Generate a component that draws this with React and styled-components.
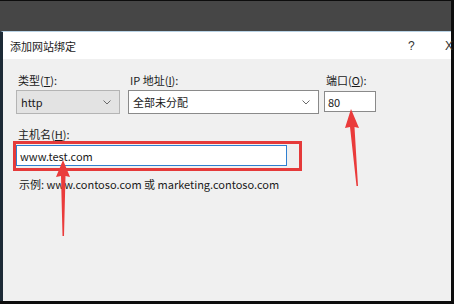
import styled, { createGlobalStyle } from 'styled-components'

const Global = createGlobalStyle`
  html, body { margin: 0; padding: 0; background: #0d0d0d; }
  body { font-family: "Noto Sans CJK SC", "Noto Sans", sans-serif; }
`

const Screen = styled.div`
  width: 454px;
  height: 304px;
  box-sizing: border-box;
  padding: 1px 3px 3px 0;
  background: #0d0d0d;
  display: flex;
  flex-direction: column;
  position: relative;
  overflow: hidden;
`

const TopBar = styled.div`
  height: 30px;
  background: #464646;
  flex-shrink: 0;
`

const Dialog = styled.div`
  flex: 1;
  display: flex;
  flex-direction: column;
  border-left: 3px solid #1d2a36;
  border-top: 1px solid #b9d3e6;
  background: #f0f0f0;
`

const TitleBar = styled.div`
  height: 27px;
  background: #fff;
  display: flex;
  align-items: center;
  padding-left: 7px;
  font-size: 11px;
  color: #1a1a1a;
`

const Title = styled.span`
  flex: 1;
`

const TitleButton = styled.span`
  width: ${p => p.w}px;
  font-size: 12px;
  color: #333;
  font-family: "Liberation Sans", sans-serif;
`

const Body = styled.div`
  flex: 1;
  padding: 14px 0 0 13px;
  font-size: 11px;
  color: #1a1a1a;
`

const Row = styled.div`
  display: flex;
`

const Field = styled.div`
  display: flex;
  flex-direction: column;
  gap: 3px;
  width: ${p => p.w}px;
  margin-left: ${p => p.ml || 0}px;
  margin-top: ${p => p.mt || 0}px;
`

const Label = styled.div`
  padding-left: 2px;
  line-height: 14px;
  height: 14px;
  u { text-decoration: underline; }
`

const Select = styled.div`
  height: 24px;
  box-sizing: border-box;
  border: 1px solid ${p => (p.gray ? '#b4b4b4' : '#8a8a8a')};
  background: ${p => (p.gray ? '#e3e3e3' : '#fff')};
  display: flex;
  align-items: center;
  padding: 0 8px 0 4px;
  line-height: 1;
`

const SelectText = styled.span`
  flex: 1;
`

const Input = styled.div`
  height: ${p => p.h || 21}px;
  box-sizing: border-box;
  border: 1px solid ${p => (p.focus ? '#2f7fd0' : '#8a8a8a')};
  background: #fff;
  display: flex;
  align-items: center;
  padding-left: 3px;
  margin-top: ${p => p.mt || 0}px;
`

const Highlight = styled.div`
  width: 289px;
  box-sizing: border-box;
  border: 3px solid #e53a3a;
  padding: 1px 12px 2px 0;
  margin-left: -3px;
`

const Hint = styled.div`
  margin-top: 5px;
  padding-left: 3px;
`

const Arrow = styled.svg`
  position: absolute;
  left: ${p => p.x}px;
  top: ${p => p.y}px;
`

const Chevron = () => (
  <svg width="8" height="5" viewBox="0 0 8 5">
    <path d="M0.5 0.5 L4 4 L7.5 0.5" fill="none" stroke="#6a6a6a" strokeWidth="1" />
  </svg>
)

export default function App() {
  return (
    <>
      <Global />
      <Screen>
        <TopBar />
        <Dialog>
          <TitleBar>
            <Title>添加网站绑定</Title>
            <TitleButton w={37}>?</TitleButton>
            <TitleButton w={6}>X</TitleButton>
          </TitleBar>
          <Body>
            <Row>
              <Field w={104}>
                <Label>类型(<u>T</u>):</Label>
                <Select gray>
                  <SelectText>http</SelectText>
                  <Chevron />
                </Select>
              </Field>
              <Field w={191} ml={8}>
                <Label>IP 地址(<u>I</u>):</Label>
                <Select>
                  <SelectText>全部未分配</SelectText>
                  <Chevron />
                </Select>
              </Field>
              <Field w={52} ml={5}>
                <Label>端口(<u>O</u>):</Label>
                <Input mt={1}>80</Input>
              </Field>
            </Row>
            <Field w={300} mt={13}>
              <Label>主机名(<u>H</u>):</Label>
            </Field>
            <Highlight>
              <Input focus h={21}>www.test.com</Input>
            </Highlight>
            <Hint>示例: www.contoso.com 或 marketing.contoso.com</Hint>
          </Body>
        </Dialog>
        <Arrow x={56} y={160} width="16" height="78" viewBox="0 0 16 78">
          <polygon points="7,0 14,17 9.5,16 8,76 6.5,76 5,16 0,17" fill="#ea3b3b" />
        </Arrow>
        <Arrow x={343} y={108} width="20" height="80" viewBox="0 0 20 80">
          <polygon points="8,1 16,20 11.5,19 15,78 13.5,78 7,19 2,20" fill="#ea3b3b" />
        </Arrow>
      </Screen>
    </>
  )
}
